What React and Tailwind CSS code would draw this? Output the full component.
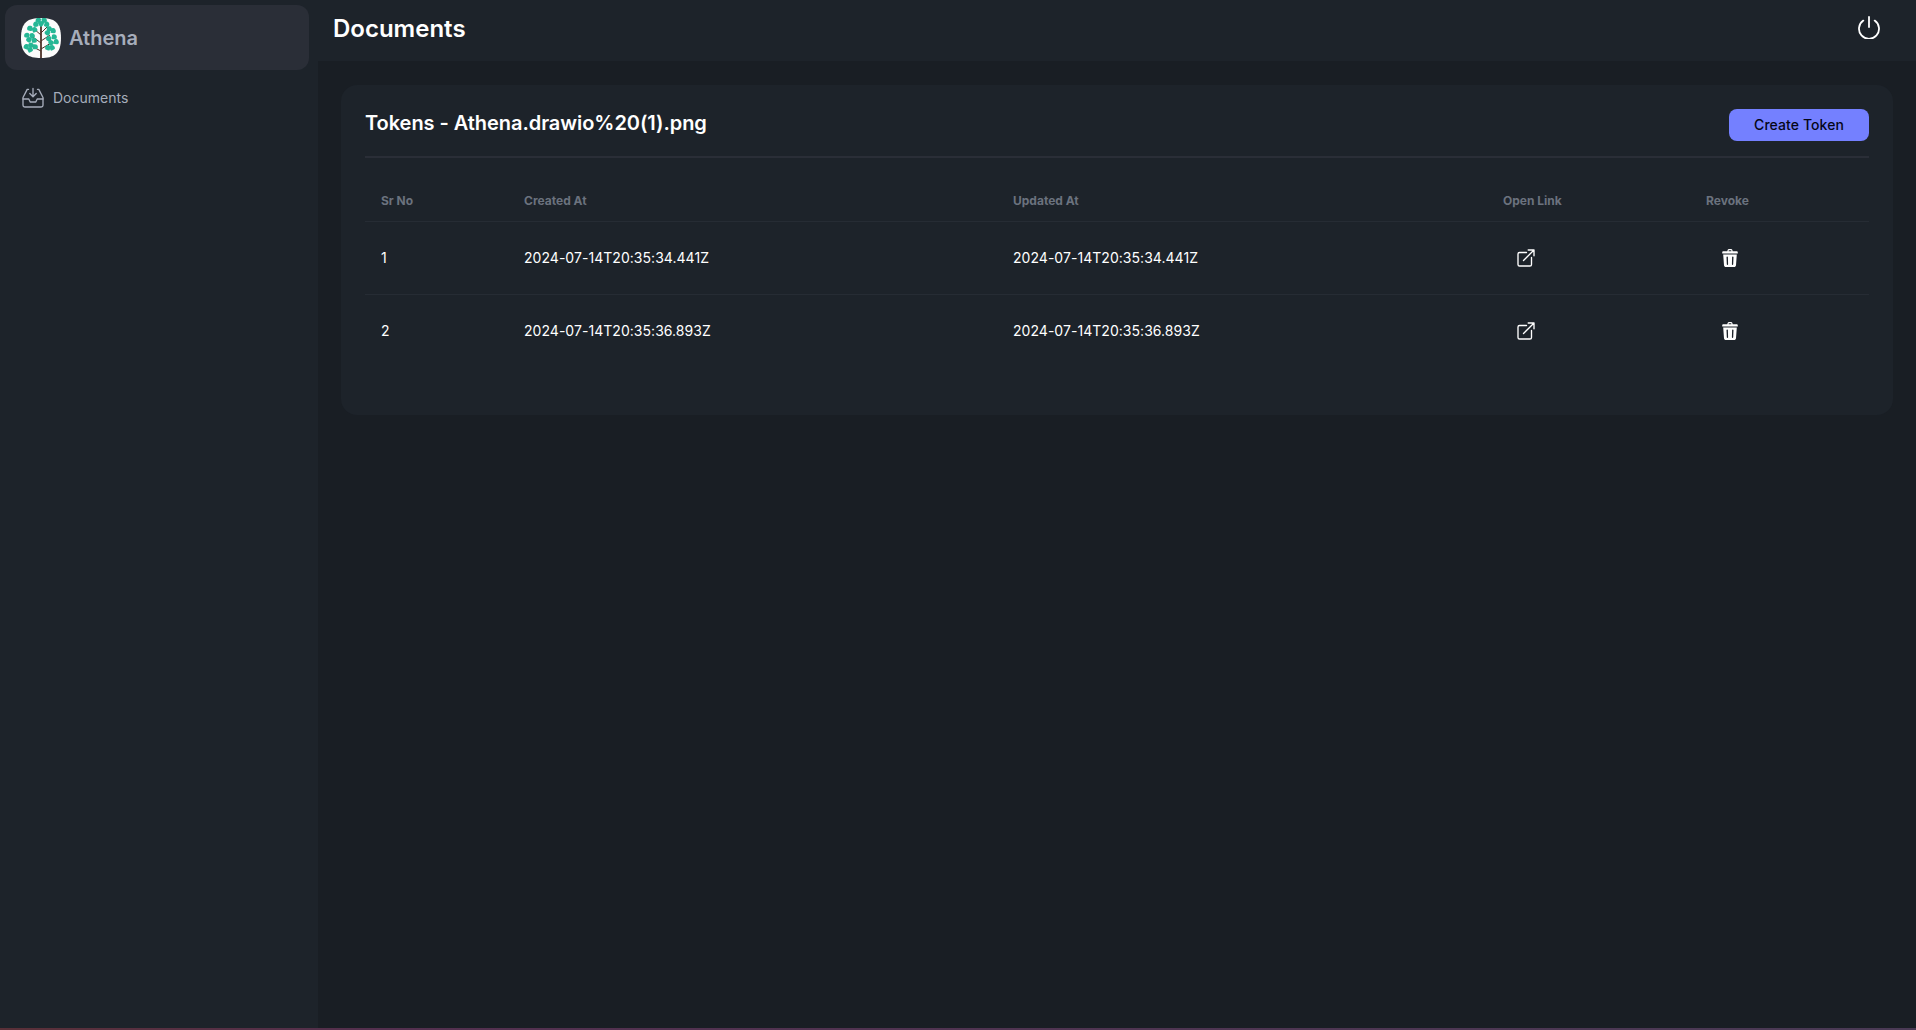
const FONT = "font-['Inter','Liberation_Sans',sans-serif]";

function TreeLogo() {
  const leaves = [
    [17.5, 2.5, -25], [23, 2.5, 25], [15, 6.5, -60], [25.5, 6.5, 60], [20, 6, 0],
    [9, 10.5, -35], [13.5, 12, 20], [28, 11, 35], [32, 13, 50], [26.5, 15, -10],
    [6, 17.5, -45], [11, 18, 20], [8, 22, -10], [13, 22.5, 40],
    [28, 21, -25], [33, 19, 45], [30, 25, 10], [35, 24, 50],
    [5.5, 29, -30], [10, 27.5, 10], [9, 32, 20], [14, 29, 40],
    [27, 30, -30], [31, 30, 20],
  ];
  return (
    <svg width="40" height="40" viewBox="0 0 40 40" className="shrink-0">
      <path d="M20 0C33 0 40 4 40 20S33 40 20 40 0 36 0 20 7 0 20 0Z" fill="#fbfbfb" />
      <g stroke="#4d3228" fill="none">
        <path d="M20 4V40" strokeWidth="1.8" />
        <path d="M20 17 13 11M20 15 26 9M20 25 12 19M20 23 29 17M20 33 10 28M20 31 30 25" strokeWidth="1" />
      </g>
      {leaves.map(([x, y, r], i) => (
        <path
          key={i}
          d="M0-2.9C1.8-2.9 3-1.1 2.9-0.3 2.3 1.2 0.9 2.3 0 2.9-0.9 2.3-2.3 1.2-2.9-0.3-3-1.1-1.8-2.9 0-2.9Z"
          fill="#25b795"
          transform={`translate(${x} ${y}) rotate(${r})`}
        />
      ))}
    </svg>
  );
}

function InboxIcon() {
  return (
    <svg width="22" height="22" viewBox="0 0 22 22" fill="none" stroke="#a6adbb" strokeWidth="1.35" strokeLinecap="round" strokeLinejoin="round" className="shrink-0">
      <path d="M6.5 2.4H5.2L1 10.5V18.2C1 19.2 1.8 20 2.8 20H19.2C20.2 20 21 19.2 21 18.2V10.5L16.8 2.4H15.5" />
      <path d="M1 12H6.8L8.2 15H13.8L15.2 12H21" />
      <path d="M11 1.5V9.5M7.8 6.5 11 9.7 14.2 6.5" />
    </svg>
  );
}

function PowerIcon() {
  return (
    <svg width="24" height="24" viewBox="0 0 24 24" fill="none" stroke="#fff" strokeWidth="1.8" strokeLinecap="round" strokeLinejoin="round">
      <path d="M12 2V12" />
      <path d="M6.3 5.6A10 10 0 1 0 17.7 5.6" />
    </svg>
  );
}

function OpenIcon() {
  return (
    <svg width="18" height="18" viewBox="0 0 18 18" fill="none" stroke="#fff" strokeWidth="1.35" strokeLinecap="round" strokeLinejoin="round">
      <path d="M9.5 3.5H2.6C1.7 3.5 1 4.2 1 5.1V15.4C1 16.3 1.7 17 2.6 17H12.9C13.8 17 14.5 16.3 14.5 15.4V8.5" />
      <path d="M6.5 11.5 17 1M11.2 1H17V6.8" />
    </svg>
  );
}

function TrashIcon() {
  return (
    <svg width="16" height="18" viewBox="0 0 16 18" fill="#fff">
      <path d="M5.5 1.4C5.7.6 6.3 0 7.2 0H8.8C9.7 0 10.3.6 10.5 1.4L10.7 2.2H14.6C15.3 2.2 15.8 2.7 15.8 3.4V4.6H.2V3.4C.2 2.7.7 2.2 1.4 2.2H5.3ZM6.6 2.2H9.4L9.3 1.6C9.2 1.3 9 1.2 8.8 1.2H7.2C7 1.2 6.8 1.3 6.7 1.6Z" />
      <path d="M1.2 5.6H14.8L14 16.2C13.9 17.2 13.1 18 12.1 18H3.9C2.9 18 2.1 17.2 2 16.2ZM5.2 7.4C4.8 7.4 4.5 7.7 4.5 8.1L4.8 15.2C4.8 15.6 5.1 15.9 5.5 15.9 5.9 15.9 6.1 15.6 6.1 15.2L5.9 8.1C5.9 7.7 5.6 7.4 5.2 7.4ZM10.8 7.4C10.4 7.4 10.1 7.7 10.1 8.1L9.9 15.2C9.9 15.6 10.1 15.9 10.5 15.9 10.9 15.9 11.2 15.6 11.2 15.2L11.5 8.1C11.5 7.7 11.2 7.4 10.8 7.4Z" />
    </svg>
  );
}

const rows = [
  { n: 1, t: "2024-07-14T20:35:34.441Z" },
  { n: 2, t: "2024-07-14T20:35:36.893Z" },
];

export default function App() {
  return (
    <div className={`${FONT} flex h-[1030px] flex-col overflow-hidden bg-[#191e24]`}>
      <div className="flex min-h-0 flex-1">
        <aside className="w-[318px] shrink-0 bg-[#1d232a] p-[5px]">
          <div className="flex h-[65px] w-[304px] items-center gap-[8px] rounded-[12px] bg-[#2a2e37] pl-[16px]">
            <TreeLogo />
            <span className="text-[20px] font-semibold text-[#a6adbb]">Athena</span>
          </div>
          <div className="mt-[17px] flex items-center gap-[9px] pl-[17px]">
            <InboxIcon />
            <span className="text-[14px] leading-[22px] text-[#a6adbb]">Documents</span>
          </div>
        </aside>
        <div className="flex min-w-0 flex-1 flex-col">
          <header className="flex h-[61px] shrink-0 items-start justify-between bg-[#1d232a] pl-[15px] pr-[35px]">
            <h1 className="mt-[13px] text-[24px] leading-[32px] font-semibold text-white">Documents</h1>
            <div className="mt-[15px]"><PowerIcon /></div>
          </header>
          <main className="px-[23px] pt-[24px]">
            <section className="h-[330px] rounded-[16px] bg-[#1d232a] px-[24px] pt-[24px]">
              <div className="flex h-[49px] items-start justify-between border-b-2 border-[#2a2e37]">
                <h2 className="text-[20px] leading-[28px] font-semibold tracking-[-0.05px] text-white">Tokens - Athena.drawio%20(1).png</h2>
                <button className="h-[32px] w-[140px] rounded-[8px] bg-[#7480ff] pb-[1px] text-[14px] font-medium tracking-[0.08px] text-[#050617]">Create Token</button>
              </div>
              <table className="mt-[21px] w-[1504px] table-fixed border-collapse">
                <colgroup>
                  <col className="w-[143px]" />
                  <col className="w-[489px]" />
                  <col className="w-[490px]" />
                  <col className="w-[203px]" />
                  <col className="w-[179px]" />
                </colgroup>
                <thead>
                  <tr className="h-[42px] border-b border-[#262c34] text-left text-[12px] font-bold text-[#6b727e]">
                    <th className="px-[16px] pt-[2px] font-bold">Sr No</th>
                    <th className="px-[16px] pt-[2px] font-bold">Created At</th>
                    <th className="px-[16px] pt-[2px] font-bold">Updated At</th>
                    <th className="px-[16px] pt-[2px] font-bold">Open Link</th>
                    <th className="px-[16px] pt-[2px] font-bold">Revoke</th>
                  </tr>
                </thead>
                <tbody>
                  {rows.map((r, i) => (
                    <tr key={r.n} className={`h-[73px] text-[14px] tracking-[0.04px] text-white ${i === 0 ? "border-b border-[#262c34]" : ""}`}>
                      <td className="px-[16px]">{r.n}</td>
                      <td className="px-[16px]">{r.t}</td>
                      <td className="px-[16px]">{r.t}</td>
                      <td className="px-[16px]"><div className="ml-[14px] flex"><OpenIcon /></div></td>
                      <td className="px-[16px]"><div className="ml-[16px] flex"><TrashIcon /></div></td>
                    </tr>
                  ))}
                </tbody>
              </table>
            </section>
          </main>
        </div>
      </div>
      <div className="h-[2px] shrink-0 bg-[linear-gradient(90deg,#5a3038,#54304f_20%,#4a3a55)]" />
    </div>
  );
}
